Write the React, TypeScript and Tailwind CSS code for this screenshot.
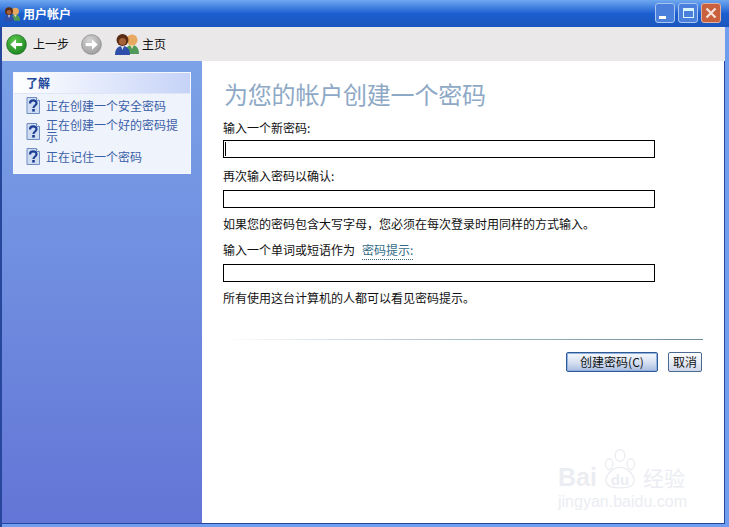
const cjk = "font-['Noto_Sans_CJK_SC','Liberation_Sans',sans-serif]";

// two xp style user heads, used in title bar and toolbar
const UsersIcon = ({ size }: { size: number }) => (
    <svg width={size} height={size} viewBox="0 0 24 24">
        <circle cx="17" cy="8" r="5.500" fill="#e8a860" />
        <path d="M10 22c0-6 3-9 7-9s7 3 7 9z" fill="#4f9a58" />
        <path d="M15 13l2 4 2-4z" fill="#f0d8a8" />
        <circle cx="7.500" cy="8" r="6" fill="#5a2c14" />
        <circle cx="7.500" cy="9.500" r="3.500" fill="#a5623a" />
        <path d="M0 23c0-6 3-9 7.500-9s7.500 3 7.500 9z" fill="#2f4fa8" />
        <path d="M6 14l1.500 4 1.500-4z" fill="#e6e6f0" />
    </svg>
);

const NavButton = ({ from, to, border, flip }: { from: string; to: string; border: string; flip?: boolean }) => (
    <svg width="21" height="21" viewBox="0 0 22 22">
        <defs>
            <radialGradient id={from} cx="40%" cy="30%" r="75%">
                <stop offset="0%" stopColor={from} />
                <stop offset="100%" stopColor={to} />
            </radialGradient>
        </defs>
        <circle cx="11" cy="11" r="10.300" fill={`url(#${from})`} stroke={border} strokeWidth="0.800" />
        <path
            d={flip ? "M5 9.300h6.500V5.500l6 5.500-6 5.500v-3.800H5z" : "M17 9.300h-6.500V5.500l-6 5.500 6 5.500v-3.800H17z"}
            fill="#fff"
        />
    </svg>
);

const HelpIcon = () => (
    <svg width="14" height="17" viewBox="0 0 14 17" className="shrink-0">
        <path d="M1 .500h9.500l3 3v13H1z" fill="#cfdcf2" stroke="#6f8cc0" />
        <path d="M10.500.500v3h3" fill="#fff" stroke="#6f8cc0" />
        <path d="M4 6.500c0-4 6.500-4 6.500-.3 0 2.300-3 2.300-3 4.800" fill="none" stroke="#1c3f94" strokeWidth="2.200" />
        <rect x="6.200" y="12" width="2.600" height="2.600" fill="#1c3f94" />
    </svg>
);

const HelpItem = ({ children }: { children: React.ReactNode }) => (
    <div className="flex items-center gap-[6px] pl-[12px] pr-1">
        <HelpIcon />
        <span className="text-[12px] leading-[12px] text-[#3b5fa8] w-[140px]">{children}</span>
    </div>
);

const TextBox = ({ caret }: { caret?: boolean }) => (
    <div className="w-[432px] h-[18px] border border-black bg-white pl-px py-px mt-[6px]">
        {caret && <div className="w-px h-full bg-black" />}
    </div>
);

const Label = ({ children, className }: { children: React.ReactNode; className?: string }) => (
    <p className={`text-[12px] leading-[16px] text-[#111] ${className ?? ""}`}>{children}</p>
);

const App = () => {
    return (
        <main className={`w-[729px] h-[527px] flex flex-col overflow-hidden bg-[#6f9df0] ${cjk}`}>
            {/* title bar */}
            <header className="h-[27px] shrink-0 flex items-center justify-between pl-[4px] pr-[8px] bg-gradient-to-b from-[#6fa8f0] via-[#1c5fd0] to-[#1a55bd]">
                <div className="flex items-center gap-[3px]">
                    <UsersIcon size={16} />
                    <span className="text-[12px] font-bold text-white">用户帐户</span>
                </div>
                <div className="flex gap-[3px] -mt-[1px]">
                    <div className="w-[20px] h-[20px] rounded-[3px] border border-[#a8c4f0] bg-[#4a80dc] flex items-end justify-center pb-[3px] pr-[5px]">
                        <div className="w-[7px] h-[3px] bg-white" />
                    </div>
                    <div className="w-[20px] h-[20px] rounded-[3px] border border-[#a8c4f0] bg-[#4a80dc] flex items-center justify-center">
                        <div className="w-[11px] h-[10px] border border-[#d8f4ff] border-t-[3px]" />
                    </div>
                    <div className="w-[20px] h-[20px] rounded-[3px] border border-[#e0b0a0] bg-[#c9603e] flex items-center justify-center">
                        <svg width="12" height="12" viewBox="0 0 12 12">
                            <path d="M1.500 1.500l9 9M10.500 1.500l-9 9" stroke="#f4e4dc" strokeWidth="2.200" />
                        </svg>
                    </div>
                </div>
            </header>

            <div className="flex-1 min-h-0 flex flex-col border-l-2 border-[#27479c] pr-[4px] pb-[3px]">
                {/* toolbar */}
                <nav className="h-[34px] shrink-0 flex items-center bg-[#ebe8ea] pl-[4px]">
                    <NavButton from="#5cc84c" to="#1a8420" border="#1a6a20" />
                    <span className="ml-[6px] text-[12px] text-[#111]">上一步</span>
                    <div className="ml-[12px]">
                        <NavButton from="#d4d4d4" to="#9c9c9c" border="#8a8a8a" flip />
                    </div>
                    <div className="ml-[13px]">
                        <UsersIcon size={24} />
                    </div>
                    <span className="ml-[3px] text-[12px] text-[#111]">主页</span>
                </nav>

                <div className="relative flex-1 min-h-0 flex border-b border-r border-[#27479c]">
                    {/* left task pane */}
                    <aside className="w-[200px] shrink-0 bg-gradient-to-b from-[#7ba2e7] to-[#6375d6] pl-[11px] pr-[11px] pt-[11px]">
                        <div className="border border-[#f4f7fe]">
                            <div className="h-[21px] flex items-center pl-[12px] bg-gradient-to-r from-white to-[#c6d3f7] border-b border-[#dfe6f6]">
                                <span className="text-[12px] font-bold text-[#1f4a9c]">了解</span>
                            </div>
                            <div className="bg-[#eff3fb] pt-[3px] pb-[8px] flex flex-col gap-[5px]">
                                <HelpItem>正在创建一个安全密码</HelpItem>
                                <HelpItem>正在创建一个好的密码提示</HelpItem>
                                <HelpItem>正在记住一个密码</HelpItem>
                            </div>
                        </div>
                    </aside>

                    {/* form */}
                    <section className="flex-1 min-w-0 bg-white pl-[21px] pr-[21px] pt-[17px]">
                        <h1 className="ml-[1px] text-[24px] leading-[32px] font-normal tracking-[-0.2px] text-[#8ea9c6]">为您的帐户创建一个密码</h1>
                        <Label className="mt-[10px]">输入一个新密码:</Label>
                        <div className="-mt-[2px]">
                            <TextBox caret />
                        </div>
                        <Label className="mt-[10px]">再次输入密码以确认:</Label>
                        <TextBox />
                        <Label className="mt-[8px]">如果您的密码包含大写字母，您必须在每次登录时用同样的方式输入。</Label>
                        <Label className="mt-[10px]">
                            输入一个单词或短语作为
                            <span className="ml-[7px] text-[#336b87] border-b border-dotted border-[#336b87] pb-px">密码提示:</span>
                        </Label>
                        <TextBox />
                        <Label className="mt-[8px]">所有使用这台计算机的人都可以看见密码提示。</Label>

                        <div className="mt-[33px] h-px bg-gradient-to-r from-white via-[#a9bfcc] to-[#6e8a9a]" />
                        <div className="mt-[12px] flex justify-end gap-[10px] pr-px">
                            <button className="w-[92px] h-[20px] rounded-[2px] border border-[#2f5a92] bg-gradient-to-b from-[#f6f8fc] via-[#d8e2f2] to-[#a9bde0] text-[12px] leading-none text-[#111] shadow-[inset_0_0_0_1px_#8fb0e0]">创建密码(C)</button>
                            <button className="w-[34px] h-[20px] rounded-[2px] border border-[#4a6a94] bg-gradient-to-b from-white to-[#cfd8ea] text-[12px] leading-none text-[#111]">取消</button>
                        </div>
                    </section>

                    {/* baidu watermark */}
                    <div className="absolute left-[556px] top-[403px] w-[160px] text-[#ebedf2] select-none">
                        <div className="flex items-end font-['Liberation_Sans',sans-serif] font-bold">
                            <span className="text-[25px] leading-[26px]">Bai</span>
                            <span className="relative w-[46px] h-[26px] flex items-end justify-center">
                                <svg className="absolute left-[5px] bottom-0" width="36" height="41" viewBox="0 0 32 38" fill="none" stroke="currentColor" strokeWidth="1.300">
                                    <ellipse cx="6" cy="14" rx="3.500" ry="5" />
                                    <ellipse cx="16" cy="6" rx="4.500" ry="5.500" />
                                    <ellipse cx="26" cy="14" rx="3.500" ry="5" />
                                    <path d="M3 29c0-6 7-12 13-12s13 6 13 12c0 6-7 7-13 7s-13-1-13-7z" />
                                </svg>
                                <span className="relative text-[15px] leading-[20px]">du</span>
                            </span>
                            <span className={`text-[21px] leading-[26px] font-normal ${cjk}`}>经验</span>
                        </div>
                        <p className="text-[16px] leading-[16px] mt-[4px] font-['Liberation_Sans',sans-serif]">jingyan.baidu.com</p>
                    </div>
                </div>
            </div>
        </main>
    );
};

export default App;
